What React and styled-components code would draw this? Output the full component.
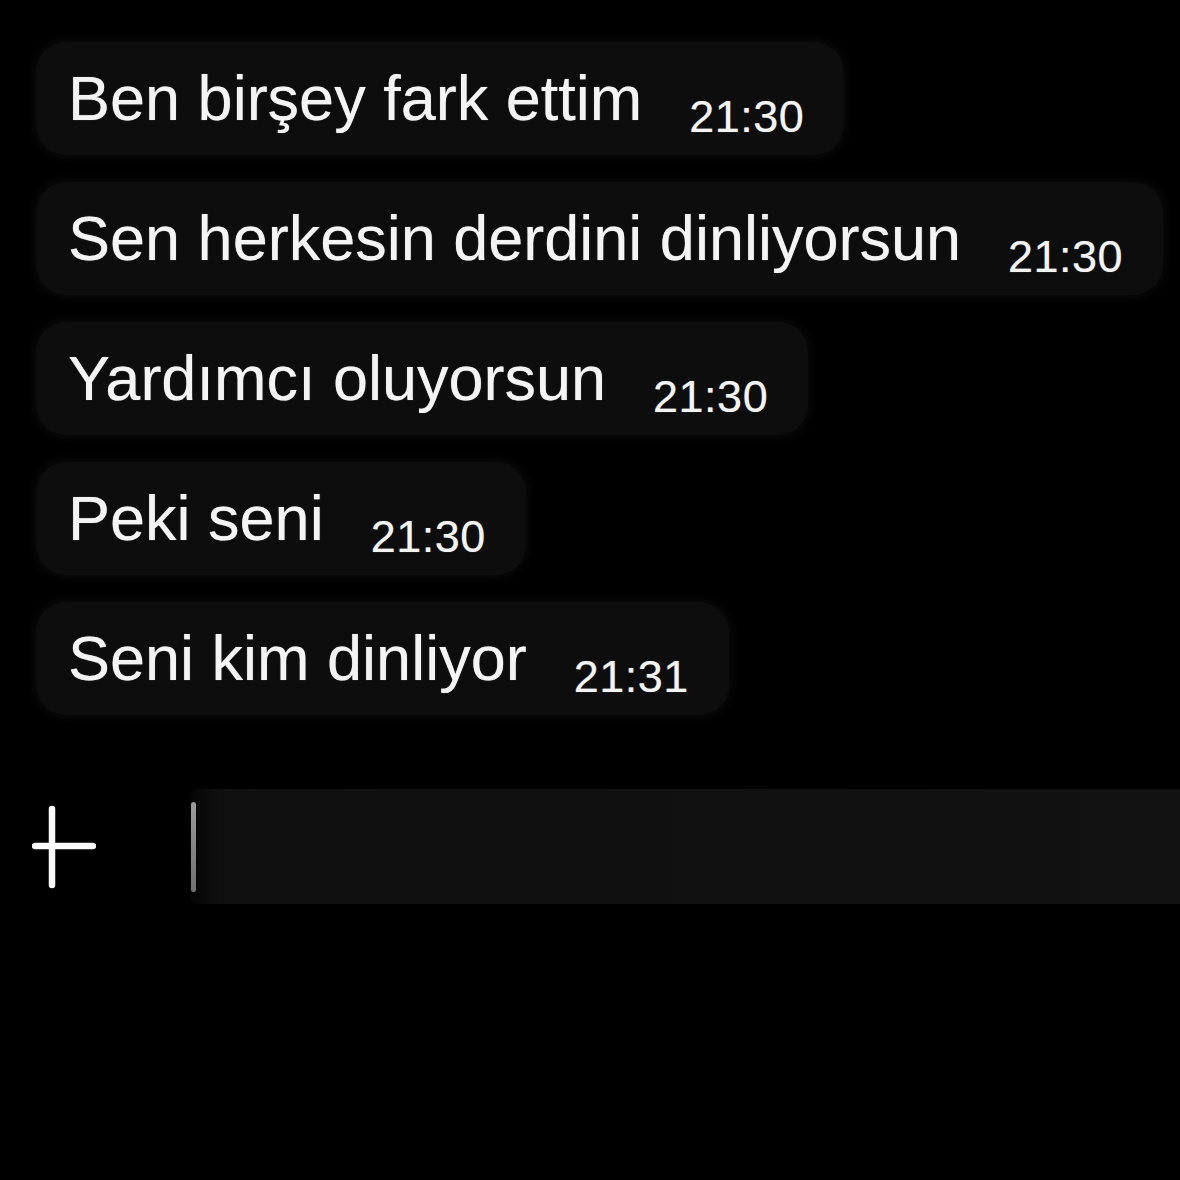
import styled, { createGlobalStyle } from "styled-components"

const GlobalStyle = createGlobalStyle`
    html, body {
        margin: 0;
        padding: 0;
        background: #000;
    }
    body {
        font-family: "Liberation Sans", Arial, sans-serif;
        color: #f4f4f4;
    }
`

const Screen = styled.div`
    width: 1180px;
    height: 1180px;
    background: #000;
    overflow: hidden;
    display: flex;
    flex-direction: column;
    padding-top: 42px;
    box-sizing: border-box;
`

const Thread = styled.div`
    display: flex;
    flex-direction: column;
    align-items: flex-start;
    gap: 27px;
    padding-left: 36px;
`

const Bubble = styled.div`
    display: flex;
    align-items: flex-start;
    height: 113px;
    box-sizing: border-box;
    padding: 16px 40px 0 32px;
    background: #0d0d0d;
    border-radius: 30px;
    box-shadow: 0 0 10px 3px #0a0a0a;
`

const Text = styled.span`
    font-size: 63px;
    line-height: 80px;
    white-space: nowrap;
    text-shadow: 0 0 1px rgba(255, 255, 255, 0.6);
`

const Time = styled.span`
    margin-top: 29px;
    margin-left: 47px;
    font-size: 45px;
    line-height: 60px;
    letter-spacing: 0.5px;
    white-space: nowrap;
    text-shadow: 0 0 1px rgba(255, 255, 255, 0.5);
`

const Composer = styled.div`
    display: flex;
    align-items: center;
    margin-top: 74px;
    height: 115px;
`

const PlusButton = styled.div`
    width: 190px;
    height: 115px;
    display: flex;
    align-items: center;
    padding-left: 32px;
    box-sizing: border-box;
`

const Field = styled.div`
    flex: 1;
    height: 115px;
    display: flex;
    align-items: center;
    background: linear-gradient(90deg, #050505 0px, #0f0f0f 30px, #121212 100%);
    border-radius: 6px 0 0 6px;
`

const Caret = styled.div`
    width: 5px;
    height: 90px;
    margin-left: 1px;
    border-radius: 3px;
    background: linear-gradient(180deg, #9a9a9a, #707070);
`

const messages = [
    { text: "Ben birşey fark ettim", time: "21:30" },
    { text: "Sen herkesin derdini dinliyorsun", time: "21:30" },
    { text: "Yardımcı oluyorsun", time: "21:30" },
    { text: "Peki seni", time: "21:30" },
    { text: "Seni kim dinliyor", time: "21:31" },
]

const App = () => {
    return (
        <Screen>
            <GlobalStyle />
            <Thread>
                {messages.map((m, i) => (
                    <Bubble key={i}>
                        <Text>{m.text}</Text>
                        <Time>{m.time}</Time>
                    </Bubble>
                ))}
            </Thread>

            <Composer>
                <PlusButton>
                    <svg width="64" height="84" viewBox="0 0 64 84">
                        <path
                            d="M20 4 V80 M3 41 H61"
                            stroke="#fafafa"
                            strokeWidth="6.5"
                            strokeLinecap="round"
                            fill="none"
                        />
                    </svg>
                </PlusButton>
                <Field>
                    <Caret />
                </Field>
            </Composer>
        </Screen>
    )
}

export default App
